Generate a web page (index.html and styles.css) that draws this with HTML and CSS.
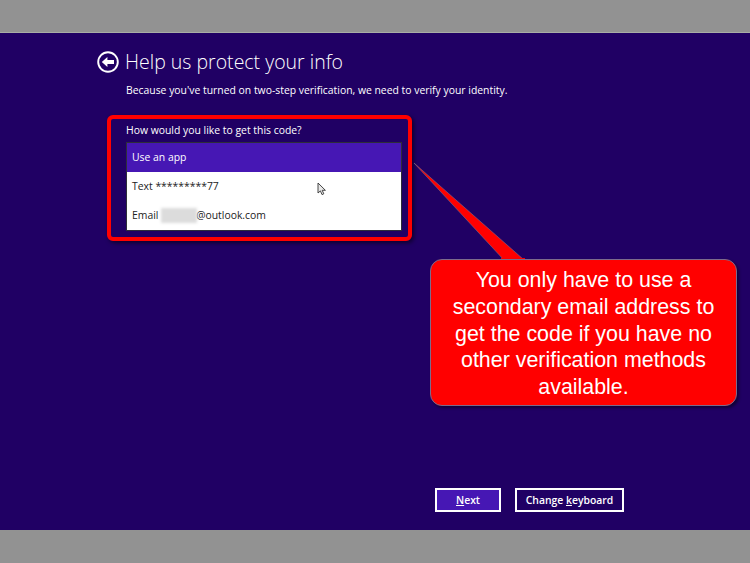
FILE: index.html
```html
<!DOCTYPE html>
<html lang="en">
<head>
<meta charset="utf-8">
<title>Help us protect your info</title>
<link rel="stylesheet" href="styles.css">
</head>
<body>
<div class="band band-top"></div>
<main class="screen">
  <header class="head">
    <svg class="back" viewBox="0 0 22 22" aria-hidden="true">
      <circle cx="11" cy="11" r="9.8" fill="none" stroke="#fff" stroke-width="1.9"/>
      <path d="M4.8 11 L10.4 5.9 V9.1 H17 V12.9 H10.4 V16.1 Z" fill="#fff"/>
    </svg>
    <h1 class="title">Help us protect your info</h1>
  </header>
  <p class="sub">Because you've turned on two-step verification, we need to verify your identity.</p>
  <section class="frame">
    <p class="prompt">How would you like to get this code?</p>
    <div class="list">
      <div class="row row-on">Use an app</div>
      <div class="row">Text *********77</div>
      <div class="row">Email <span class="blur"></span>@outlook.com</div>
    </div>
  </section>
  <footer class="actions">
    <button class="btn btn-next"><u>N</u>ext</button>
    <button class="btn btn-kbd">Change <u>k</u>eyboard</button>
  </footer>
  <svg class="cursor" viewBox="0 0 10 14" aria-hidden="true">
    <path d="M1 1 V11 L3.4 8.9 L5 12.6 L6.8 11.8 L5.2 8.3 H8.4 Z" fill="#e8e8e8" stroke="#333" stroke-width="0.9"/>
  </svg>
  <svg class="tail" viewBox="0 0 112 100" aria-hidden="true">
    <path d="M1 1 L90 97 H110 Z" fill="#ff0000" stroke="#7a6a8a" stroke-width="0.6"/>
    <path d="M88 96 H112 V100 H88 Z" fill="#ff0000"/>
  </svg>
  <aside class="callout">You only have to use a secondary email address to get the code if you have no other verification methods available.</aside>
</main>
<div class="band band-bottom"></div>
</body>
</html>
```
FILE: styles.css
```css
* { box-sizing: border-box; }
html, body { margin: 0; padding: 0; }
body {
  width: 750px;
  height: 563px;
  overflow: hidden;
  display: flex;
  flex-direction: column;
  font-family: "Open Sans", "Liberation Sans", sans-serif;
}
.band { background: #929292; }
.band-top { height: 33px; border-bottom: 1px solid #a9ada6; }
.band-bottom { height: 33px; }
.screen {
  position: relative;
  flex: 1;
  background: #200064;
  color: #fff;
  padding: 15px 0 18px 97px;
  display: flex;
  flex-direction: column;
}
.head { display: flex; align-items: center; gap: 6px; height: 27px; }
.back { width: 22px; height: 22px; flex: none; }
.title { margin: 0; font-size: 19.5px; font-weight: 300; line-height: 27px; white-space: nowrap; }
.sub { margin: 8px 0 0 29px; font-size: 10.4px; line-height: 14px; white-space: nowrap; }
.frame {
  width: 305px;
  height: 126px;
  margin: 18px 0 0 10px;
  padding: 4px 5px 0 15px;
  border: 4px solid #ff0000;
  border-radius: 6px;
  box-shadow: 2px 2px 4px rgba(0, 0, 0, 0.55);
}
.prompt { margin: 0 0 4px; font-size: 10.4px; line-height: 15px; white-space: nowrap; }
.list {
  width: 276px;
  border: 1px solid #2e2e3a;
  background: #fff;
  color: #222;
}
.row {
  height: 29px;
  padding-left: 5px;
  font-size: 10.4px;
  line-height: 28px;
  white-space: nowrap;
}
.row-on { background: #4617b4; color: #fff; }
.blur {
  display: inline-block;
  width: 36px;
  height: 15px;
  margin-right: -1px;
  vertical-align: -4px;
  background: #dcdcdc;
  filter: blur(1.5px);
}
.actions { margin-top: auto; margin-left: 338px; display: flex; gap: 14px; }
.btn {
  height: 24px;
  padding: 0;
  border: 2px solid #fff;
  color: #fff;
  font: 600 10.4px/20px "Open Sans", "Liberation Sans", sans-serif;
}
.btn-next { width: 66px; background: #4617b4; }
.btn-kbd { width: 109px; background: #200064; }
.cursor { position: absolute; left: 317px; top: 149px; width: 10px; height: 14px; }
.tail { position: absolute; left: 413px; top: 129px; width: 112px; height: 100px; }
.callout {
  position: absolute;
  left: 430px;
  top: 226px;
  width: 307px;
  height: 147px;
  padding: 7px 12px 0;
  background: #ff0000;
  border: 1px solid #7c6a8c;
  border-radius: 12px;
  box-shadow: 2px 2px 3px rgba(0, 0, 0, 0.45);
  font: 21.4px/26.8px "Liberation Sans", Arial, sans-serif;
  text-align: center;
}
```
